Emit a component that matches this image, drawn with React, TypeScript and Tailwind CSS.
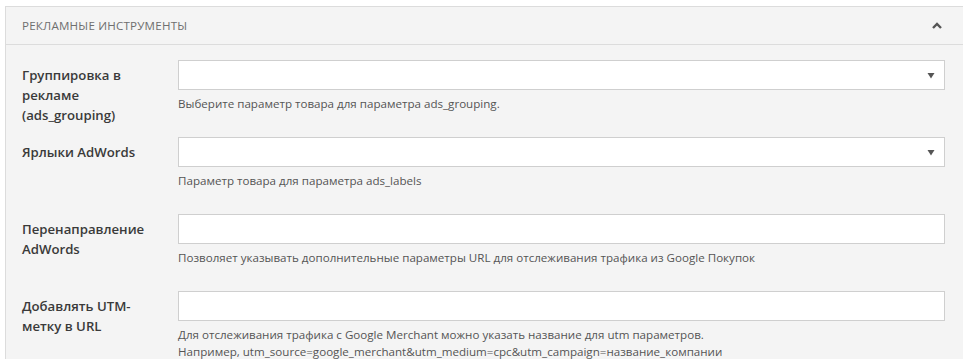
import React from "react";

const font = { fontFamily: '"Open Sans", "Noto Sans", sans-serif' };

function Arrow() {
  return (
    <svg width="8" height="7" viewBox="0 0 8 7" className="shrink-0">
      <path d="M0.5 1 L7.5 1 L4 6.5 Z" fill="#555" />
    </svg>
  );
}

function Row({
  label,
  help,
  select,
}: {
  label: React.ReactNode;
  help: React.ReactNode;
  select?: boolean;
}) {
  return (
    <div className="flex h-[77px]">
      <div className="w-[156px] pr-4 mt-[5px] text-[13.2px] leading-[20px] font-semibold text-[#3a3a3a]">
        {label}
      </div>
      <div className="w-[767px]">
        <div className="h-[30px] bg-white border border-[#cfcfcf] flex items-center justify-end pr-[9px]">
          {select ? <Arrow /> : null}
        </div>
        <div className="mt-[5px] text-[11.6px] leading-[17px] text-[#555]">{help}</div>
      </div>
    </div>
  );
}

export default function App() {
  return (
    <div className="w-[963px] h-[359px] overflow-hidden bg-white pl-[5px] pt-[6px]" style={font}>
      <div className="w-[972px] border border-[#dcdcdc] bg-[#f4f4f4]">
        <div className="h-[38px] border-b border-[#dcdcdc] flex items-center justify-between pl-[16px] pr-[34px]">
          <span className="text-[11.6px] tracking-[0.2px] text-[#6f6f6f] uppercase">
            Рекламные инструменты
          </span>
          <svg width="10" height="7" viewBox="0 0 10 7">
            <path d="M1 6 L5 2 L9 6" fill="none" stroke="#555" strokeWidth="2.4" />
          </svg>
        </div>
        <div className="pl-[16px] pt-[15px]">
          <Row
            select
            label="Группировка в рекламе (ads_grouping)"
            help="Выберите параметр товара для параметра ads_grouping."
          />
          <Row select label="Ярлыки AdWords" help="Параметр товара для параметра ads_labels" />
          <Row
            label="Перенаправление AdWords"
            help="Позволяет указывать дополнительные параметры URL для отслеживания трафика из Google Покупок"
          />
          <Row
            label="Добавлять UTM-метку в URL"
            help={
              <>
                Для отслеживания трафика с Google Merchant можно указать название для utm параметров.
                <br />
                Например, utm_source=google_merchant&amp;utm_medium=cpc&amp;utm_campaign=название_компании
              </>
            }
          />
        </div>
      </div>
    </div>
  );
}
